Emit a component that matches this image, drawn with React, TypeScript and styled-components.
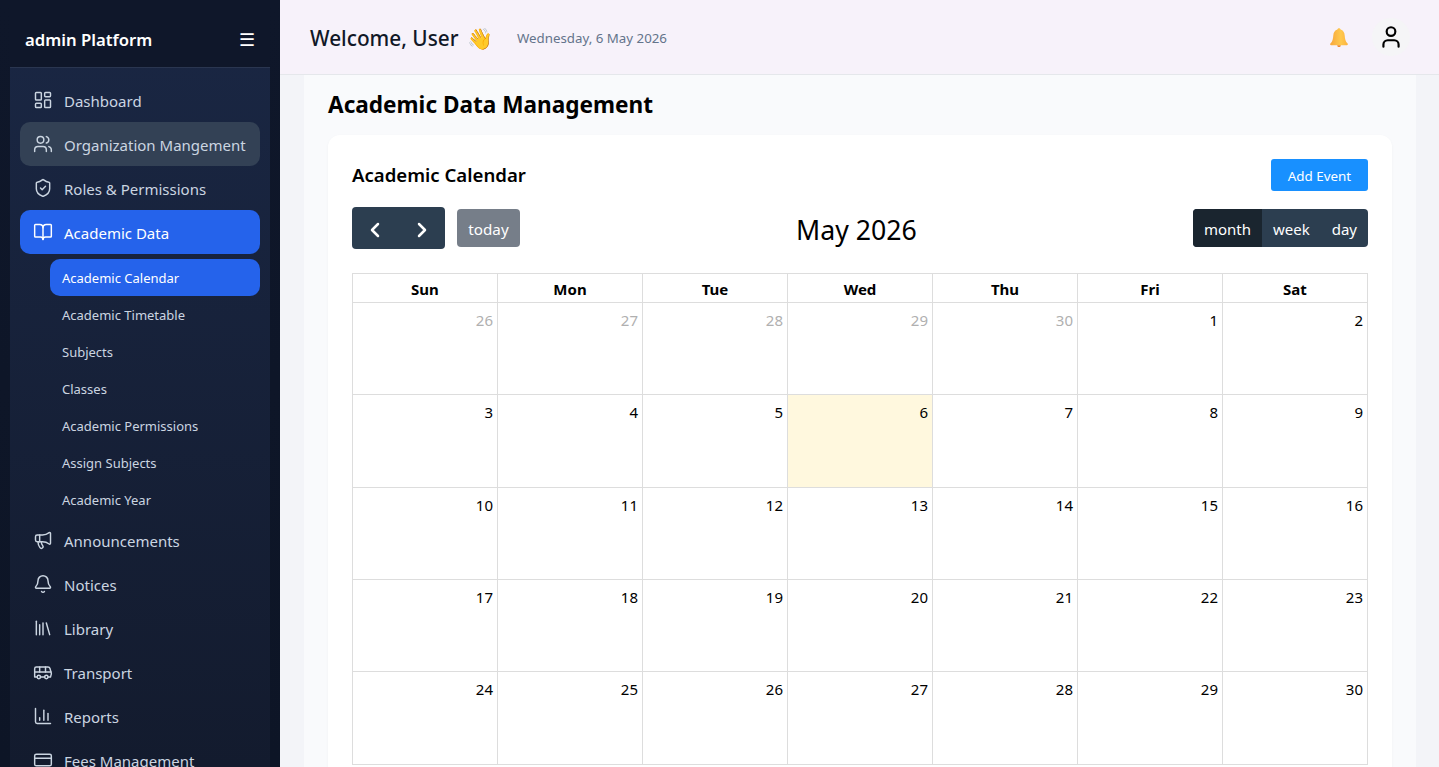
import React from 'react';
import styled, {createGlobalStyle} from 'styled-components';
import {
  LayoutDashboard,
  Users,
  ShieldCheck,
  BookOpen,
  Megaphone,
  Bell,
  Library,
  Bus,
  ChartColumn,
  CreditCard,
  User,
  ChevronLeft,
  ChevronRight,
} from 'lucide-react';

const GlobalStyle = createGlobalStyle`
  html, body {
    margin: 0;
    height: 100%;
    overflow: hidden;
    font-family: "Noto Sans", "Open Sans", sans-serif;
  }
  * { box-sizing: border-box; }
`;

const Layout = styled.div`
  display: flex;
  height: 767px;
  overflow: hidden;
`;

const Sidebar = styled.aside`
  width: 280px;
  flex-shrink: 0;
  padding: 0 10px;
  background: linear-gradient(180deg, #0f172a 0%, #0d1526 100%);
`;

const SidebarInner = styled.div`
  height: 100%;
  background: linear-gradient(180deg, #1a2744 0%, #131b2e 100%);
`;

const Brand = styled.div`
  height: 68px;
  padding: 11px 15px 0;
  display: flex;
  align-items: center;
  justify-content: space-between;
  background: #0f172a;
  border-bottom: 1px solid #2a3650;
`;

const BrandName = styled.span`
  color: #fff;
  font-size: 16.7px;
  font-weight: 600;
`;

const MenuGlyph = styled.span`
  color: #fff;
  font-size: 18px;
  line-height: 1;
`;

const Nav = styled.nav`
  padding: 10px 10px 0;
`;

const NavItem = styled.div<{$active?: boolean; $hover?: boolean}>`
  height: 44px;
  padding: 0 0 0 13px;
  display: flex;
  align-items: center;
  gap: 11px;
  border-radius: 10px;
  font-size: 15px;
  white-space: nowrap;
  color: ${(p) => (p.$active ? '#fff' : '#cbd5e1')};
  background: ${(p) => (p.$active ? '#2563eb' : p.$hover ? '#334155' : 'transparent')};
`;

const NavLabel = styled.span`
  position: relative;
  top: 1px;
`;

const SubNav = styled.div`
  margin: 5px 0 0 30px;
`;

const SubItem = styled.div<{$active?: boolean}>`
  height: 37px;
  padding: 0 12px;
  display: flex;
  align-items: center;
  border-radius: 10px;
  font-size: 13px;
  color: ${(p) => (p.$active ? '#fff' : '#cbd5e1')};
  background: ${(p) => (p.$active ? '#2563eb' : 'transparent')};
`;

const Main = styled.main`
  flex: 1;
  min-width: 0;
  display: flex;
  flex-direction: column;
  background: #f3f4f8;
`;

const Topbar = styled.header`
  height: 75px;
  flex-shrink: 0;
  padding: 0 29px 0 30px;
  display: flex;
  align-items: center;
  background: #f7f2fa;
  border-bottom: 1px solid #e5e7eb;
`;

const Greeting = styled.h1`
  margin: 0;
  padding-top: 2px;
  font-size: 20.8px;
  font-weight: 500;
  color: #111827;
`;

const WaveEmoji = styled.span`
  margin-left: 3px;
`;

const DateText = styled.span`
  margin-left: 24px;
  padding-top: 2px;
  font-size: 13.3px;
  color: #64748b;
`;

const TopActions = styled.div`
  margin-left: auto;
  display: flex;
  align-items: center;
  gap: 22px;
`;

const BellSlot = styled.span`
  display: flex;
  padding-top: 2px;
`;

const Avatar = styled.div`
  width: 38px;
  height: 38px;
  border-radius: 50%;
  display: flex;
  align-items: center;
  justify-content: center;
  background: #f5f5f7;
  color: #000;
`;

const Content = styled.section`
  flex: 1;
  margin: 0 23px 0 24px;
  padding: 14px 24px 0;
  background: #f9fafc;
`;

const PageTitle = styled.h2`
  margin: 0 0 14px;
  font-size: 22.6px;
  line-height: 32px;
  font-weight: 700;
  color: #000;
`;

const Card = styled.div`
  padding: 24px;
  background: #fff;
  border-radius: 12px;
  box-shadow: 0 1px 3px rgba(0, 0, 0, 0.04);
`;

const CardHead = styled.div`
  display: flex;
  align-items: center;
  justify-content: space-between;
  height: 32px;
  margin-bottom: 16px;
`;

const CardTitle = styled.h3`
  margin: 0 0 2px;
  font-size: 18.6px;
  font-weight: 600;
  color: #000;
`;

const AddButton = styled.button`
  height: 32px;
  width: 97px;
  padding: 1px 0 0;
  border: 0;
  border-radius: 3px;
  background: #1890ff;
  color: #fff;
  font: inherit;
  font-size: 13.4px;
`;

const Toolbar = styled.div`
  display: flex;
  align-items: center;
  justify-content: space-between;
  height: 42px;
  margin-bottom: 24px;
`;

const ToolGroup = styled.div`
  display: flex;
  align-items: center;
  gap: 12px;
`;

const NavButtons = styled.div`
  display: flex;
  width: 93px;
  height: 42px;
  padding-top: 3px;
  border-radius: 4px;
  background: #2c3e50;
  color: #fff;
`;

const NavButton = styled.span`
  flex: 1;
  display: flex;
  align-items: center;
  justify-content: center;
`;

const TodayButton = styled.span`
  height: 38px;
  width: 63px;
  padding-top: 1px;
  display: flex;
  align-items: center;
  justify-content: center;
  border-radius: 4px;
  background: #767e89;
  color: #fff;
  font-size: 15.2px;
`;

const MonthTitle = styled.h2`
  margin: 0;
  padding-top: 2px;
  font-size: 26.7px;
  font-weight: 400;
  color: #000;
`;

const ViewSwitch = styled.div`
  display: flex;
  height: 38px;
  border-radius: 4px;
  overflow: hidden;
  background: #2c3e50;
`;

const ViewButton = styled.span<{$active?: boolean}>`
  padding: 1px 11px 0;
  display: flex;
  align-items: center;
  color: #fff;
  font-size: 15px;
  background: ${(p) => (p.$active ? '#1a252f' : 'transparent')};
`;

const CalendarGrid = styled.div`
  display: grid;
  grid-template-columns: repeat(7, 1fr);
  border-top: 1px solid #ddd;
  border-left: 1px solid #ddd;
`;

const HeadCell = styled.div`
  height: 29px;
  padding-top: 1px;
  display: flex;
  align-items: center;
  justify-content: center;
  border-right: 1px solid #ddd;
  border-bottom: 1px solid #ddd;
  font-size: 15px;
  font-weight: 700;
  color: #000;
`;

const DayCell = styled.div<{$today?: boolean; $muted?: boolean}>`
  height: 92.33px;
  padding: 5px 4px;
  text-align: right;
  border-right: 1px solid #ddd;
  border-bottom: 1px solid #ddd;
  font-size: 15px;
  line-height: 24px;
  color: ${(p) => (p.$muted ? '#b0b0b0' : '#000')};
  background: ${(p) => (p.$today ? '#fff8de' : 'transparent')};
`;

const topItems = [
  {label: 'Dashboard', icon: LayoutDashboard},
  {label: 'Organization Mangement', icon: Users, hover: true},
  {label: 'Roles & Permissions', icon: ShieldCheck},
  {label: 'Academic Data', icon: BookOpen, active: true},
];

const subItems = [
  'Academic Calendar',
  'Academic Timetable',
  'Subjects',
  'Classes',
  'Academic Permissions',
  'Assign Subjects',
  'Academic Year',
];

const bottomItems = [
  {label: 'Announcements', icon: Megaphone},
  {label: 'Notices', icon: Bell},
  {label: 'Library', icon: Library},
  {label: 'Transport', icon: Bus},
  {label: 'Reports', icon: ChartColumn},
  {label: 'Fees Management', icon: CreditCard},
];

const weekDays = ['Sun', 'Mon', 'Tue', 'Wed', 'Thu', 'Fri', 'Sat'];

const days = [
  ...[26, 27, 28, 29, 30].map((d) => ({d, muted: true})),
  ...Array.from({length: 30}, (_, i) => ({d: i + 1, muted: false})),
];

const BellIcon = () => (
  <svg width="22" height="22" viewBox="0 0 22 22" aria-label="notifications">
    <defs>
      <linearGradient id="bellFill" x1="0" y1="0" x2="1" y2="0">
        <stop offset="0" stopColor="#f7a63c" />
        <stop offset="0.6" stopColor="#ffc94d" />
        <stop offset="1" stopColor="#fdb23f" />
      </linearGradient>
    </defs>
    <path
      d="M11 1.2c.9 0 1.5.6 1.6 1.4 2.6.8 3.9 3 4.1 5.8.2 3.3.8 6 2.9 8.2.6.7.2 1.6-.7 1.6H3.1c-.9 0-1.3-.9-.7-1.6 2.1-2.2 2.7-4.9 2.9-8.2.2-2.8 1.5-5 4.1-5.8.1-.8.7-1.4 1.6-1.4z"
      fill="url(#bellFill)"
    />
    <path d="M9.2 18.2h3.6c-.1 1.2-.8 1.9-1.8 1.9s-1.7-.7-1.8-1.9z" fill="#f08a2c" />
  </svg>
);

const App: React.FC = () => {
  return (
    <Layout>
      <GlobalStyle />
      <Sidebar>
        <SidebarInner>
          <Brand>
            <BrandName>admin Platform</BrandName>
            <MenuGlyph>☰</MenuGlyph>
          </Brand>
          <Nav>
            {topItems.map(({label, icon: Icon, hover, active}) => (
              <NavItem key={label} $hover={hover} $active={active}>
                <Icon size={20} strokeWidth={1.75} />
                <NavLabel>{label}</NavLabel>
              </NavItem>
            ))}
            <SubNav>
              {subItems.map((s, i) => (
                <SubItem key={s} $active={i === 0}>
                  {s}
                </SubItem>
              ))}
            </SubNav>
            {bottomItems.map(({label, icon: Icon}) => (
              <NavItem key={label}>
                <Icon size={20} strokeWidth={1.75} />
                <NavLabel>{label}</NavLabel>
              </NavItem>
            ))}
          </Nav>
        </SidebarInner>
      </Sidebar>
      <Main>
        <Topbar>
          <Greeting>
            Welcome, User <WaveEmoji>👋</WaveEmoji>
          </Greeting>
          <DateText>Wednesday, 6 May 2026</DateText>
          <TopActions>
            <BellSlot>
              <BellIcon />
            </BellSlot>
            <Avatar>
              <User size={26} />
            </Avatar>
          </TopActions>
        </Topbar>
        <Content>
          <PageTitle>Academic Data Management</PageTitle>
          <Card>
            <CardHead>
              <CardTitle>Academic Calendar</CardTitle>
              <AddButton>Add Event</AddButton>
            </CardHead>
            <Toolbar>
              <ToolGroup>
                <NavButtons>
                  <NavButton>
                    <ChevronLeft size={24} strokeWidth={2.5} />
                  </NavButton>
                  <NavButton>
                    <ChevronRight size={24} strokeWidth={2.5} />
                  </NavButton>
                </NavButtons>
                <TodayButton>today</TodayButton>
              </ToolGroup>
              <MonthTitle>May 2026</MonthTitle>
              <ViewSwitch>
                <ViewButton $active>month</ViewButton>
                <ViewButton>week</ViewButton>
                <ViewButton>day</ViewButton>
              </ViewSwitch>
            </Toolbar>
            <CalendarGrid>
              {weekDays.map((w) => (
                <HeadCell key={w}>{w}</HeadCell>
              ))}
              {days.map(({d, muted}, i) => (
                <DayCell key={i} $muted={muted} $today={!muted && d === 6}>
                  {d}
                </DayCell>
              ))}
            </CalendarGrid>
          </Card>
        </Content>
      </Main>
    </Layout>
  );
};

export default App;
